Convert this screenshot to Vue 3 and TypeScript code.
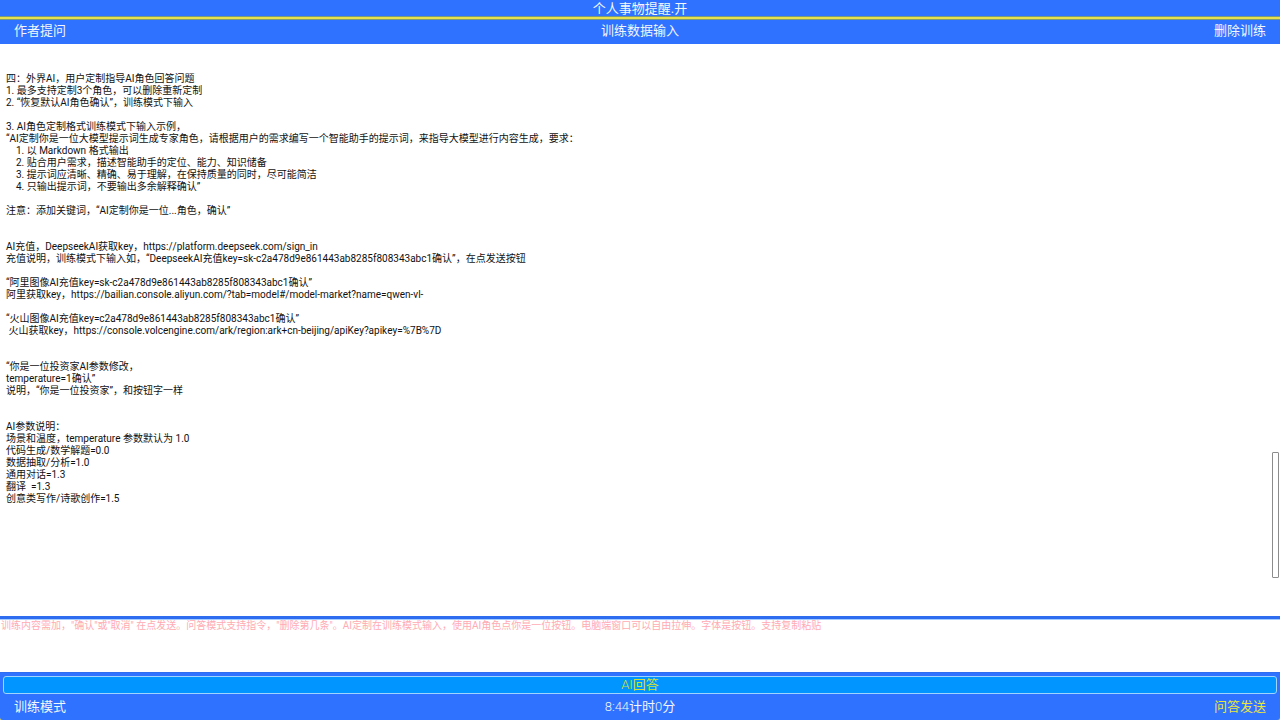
<script setup lang="ts">
import { ref } from 'vue'

const draft = ref('')
const placeholder =
  '训练内容需加，"确认"或"取消" 在点发送。问答模式支持指令，"删除第几条"。AI定制在训练模式输入，使用AI角色点你是一位按钮。电脑端窗口可以自由拉伸。字体是按钮。支持复制粘贴'

const lines: string[] = [
  '四：外界AI，用户定制指导AI角色回答问题',
  '1. 最多支持定制3个角色，可以删除重新定制',
  '2. “恢复默认AI角色确认”，训练模式下输入',
  '',
  '3. AI角色定制格式训练模式下输入示例，',
  '“AI定制你是一位大模型提示词生成专家角色，请根据用户的需求编写一个智能助手的提示词，来指导大模型进行内容生成，要求：',
  '    1. 以 Markdown 格式输出',
  '    2. 贴合用户需求，描述智能助手的定位、能力、知识储备',
  '    3. 提示词应清晰、精确、易于理解，在保持质量的同时，尽可能简洁',
  '    4. 只输出提示词，不要输出多余解释确认”',
  '',
  '注意：添加关键词，“AI定制你是一位...角色，确认”',
  '',
  '',
  'AI充值，DeepseekAI获取key，https://platform.deepseek.com/sign_in',
  '充值说明，训练模式下输入如，“DeepseekAI充值key=sk-c2a478d9e861443ab8285f808343abc1确认”，在点发送按钮',
  '',
  '“阿里图像AI充值key=sk-c2a478d9e861443ab8285f808343abc1确认”',
  '阿里获取key，https://bailian.console.aliyun.com/?tab=model#/model-market?name=qwen-vl-',
  '',
  '“火山图像AI充值key=c2a478d9e861443ab8285f808343abc1确认”',
  ' 火山获取key，https://console.volcengine.com/ark/region:ark+cn-beijing/apiKey?apikey=%7B%7D',
  '',
  '',
  '“你是一位投资家AI参数修改，',
  'temperature=1确认”',
  '说明，“你是一位投资家”，和按钮字一样',
  '',
  '',
  'AI参数说明：',
  '场景和温度，temperature 参数默认为 1.0',
  '代码生成/数学解题=0.0',
  '数据抽取/分析=1.0',
  '通用对话=1.3',
  '翻译  =1.3',
  '创意类写作/诗歌创作=1.5',
]
const content = lines.join('\n')
</script>

<template>
  <div class="app" lang="zh-CN">
    <button class="title" type="button">个人事物提醒.开</button>
    <header class="bar header">
      <button type="button">作者提问</button>
      <button type="button">训练数据输入</button>
      <button type="button">删除训练</button>
    </header>
    <main class="log">
      <div class="text">{{ content }}</div>
      <div class="thumb"></div>
    </main>
    <textarea v-model="draft" class="entry" aria-label="训练内容" :placeholder="placeholder"></textarea>
    <footer class="bottom">
      <button class="answer" type="button"><span class="thin">AI</span>回答</button>
      <div class="bar actions">
        <button type="button">训练模式</button>
        <button type="button"><span class="thin">8:44</span>计时<span class="thin">0</span>分</button>
        <button class="send" type="button">问答发送</button>
      </div>
    </footer>
  </div>
</template>

<style>
body {
  background: #c9c86a;
}
</style>

<style scoped>
.app {
  display: flex;
  flex-direction: column;
  min-height: 100vh;
  overflow: hidden;
  border-radius: 0 0 3px 3px;
  background: #2e72ff;
  font-family: Roboto, "Noto Sans CJK SC", sans-serif;
  font-kerning: none;
}
button {
  margin: 0;
  padding: 0;
  border: 0;
  background: none;
  color: #f2f7ff;
  font: inherit;
  font-size: 13px;
  line-height: 16px;
  cursor: pointer;
}
.thin {
  font-weight: 300;
}
.title {
  height: 16px;
  line-height: 18px;
}
.bar {
  display: grid;
  grid-template-columns: 1fr auto 1fr;
  align-items: center;
  padding: 0 14px;
}
.bar button:first-child {
  justify-self: start;
}
.bar button:last-child {
  justify-self: end;
}
.header {
  box-sizing: border-box;
  height: 28px;
  border-top: 1px solid #7d9a78;
  box-shadow: inset 0 2px #e6e04f, inset 0 3px #7d9a78;
}
.log {
  position: relative;
  flex: 1;
  background: #fff;
}
.text {
  padding: 29px 6px;
  color: #111;
  font-size: 10px;
  line-height: 12px;
  white-space: pre-wrap;
}
.thumb {
  position: absolute;
  right: 1px;
  bottom: 38px;
  box-sizing: border-box;
  width: 7px;
  height: 126px;
  border: 1px solid #8c8c8c;
  border-radius: 1px;
  background: #fff;
}
.entry {
  display: block;
  box-sizing: border-box;
  width: 100%;
  height: 57px;
  margin: 0;
  padding: 0 1px;
  border: 0;
  border-top: 3px solid #2e6cf0;
  border-bottom: 1px solid #2e6cf0;
  border-radius: 0;
  outline: 0;
  resize: none;
  background: #fff;
  box-shadow: inset 0 1px #a5cdff;
  color: #111;
  font: inherit;
  font-size: 10px;
  line-height: 14px;
}
.entry::placeholder {
  color: #ffabb3;
  opacity: 1;
}
.bottom {
  display: flex;
  flex-direction: column;
  padding: 3px 3px 0;
}
.answer {
  box-sizing: border-box;
  height: 18px;
  border: 1px solid #9fd4ff;
  border-radius: 3px;
  background: #0095ff;
  color: #d5e02f;
}
.actions {
  height: 26px;
  padding: 0 11px;
}
.actions .send {
  color: #ece53c;
}
</style>
